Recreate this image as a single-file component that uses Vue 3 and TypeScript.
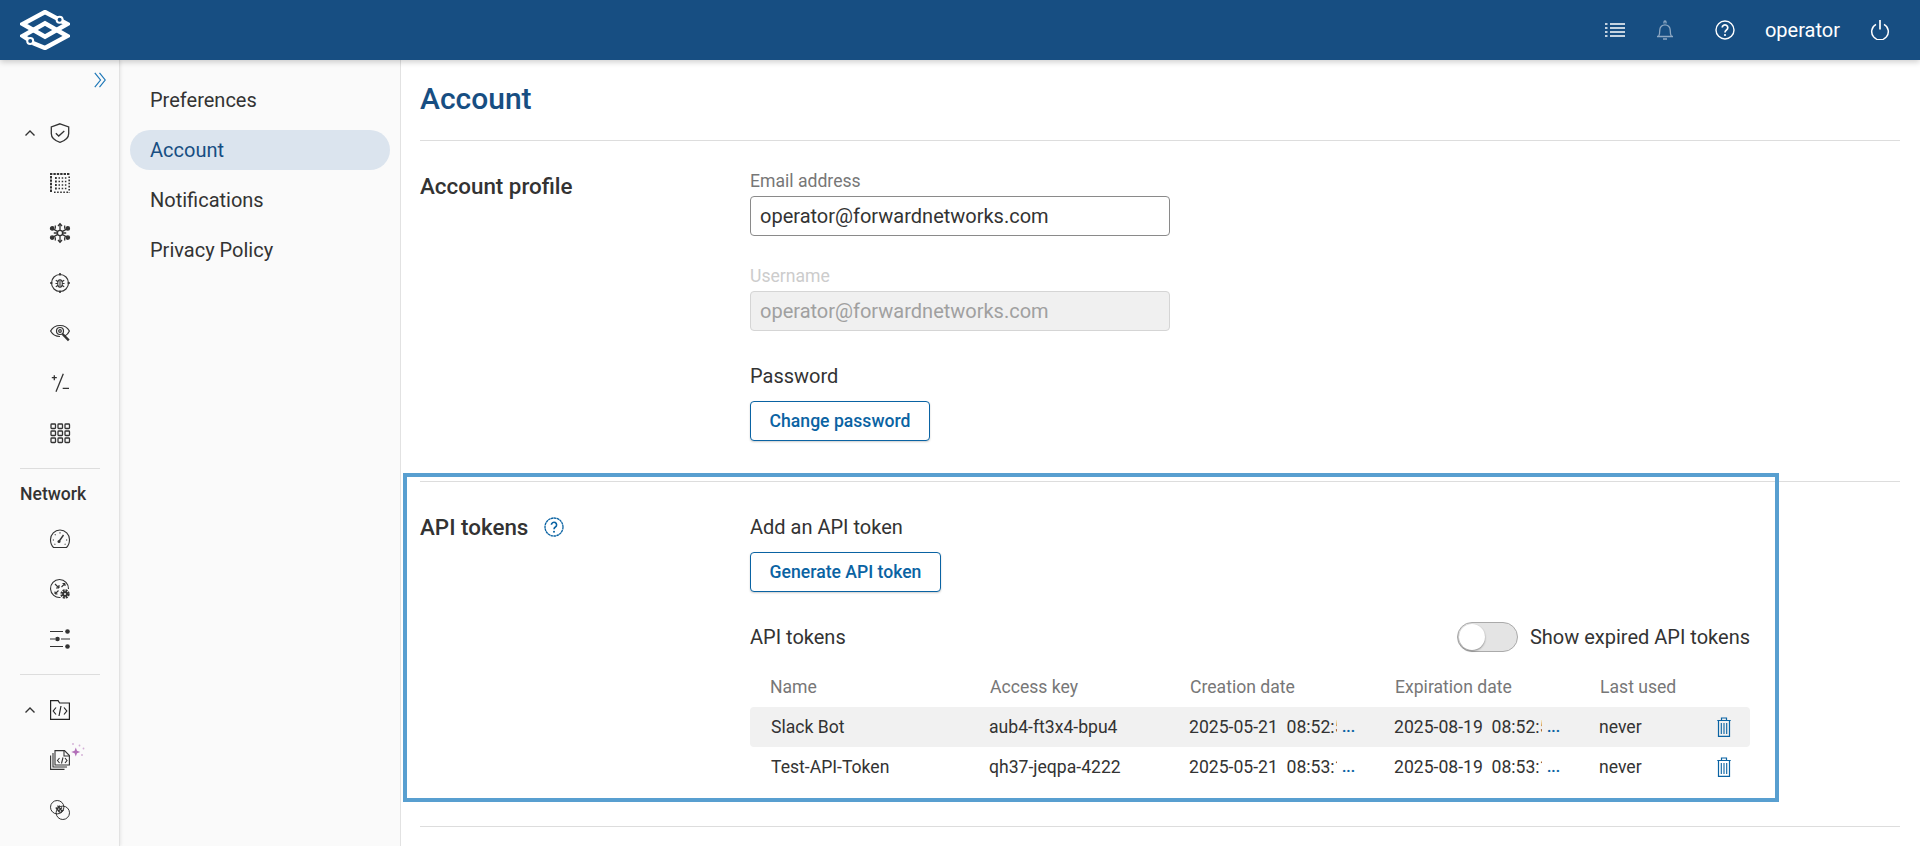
<template>
  <div class="page">
    <header class="topbar">
      <svg class="logo" viewBox="0 0 50 40" fill="none" stroke="#fff" stroke-width="4.400" stroke-linejoin="miter">
        <path d="M37 8.400 25 2 2.800 14 25 26.600 47.200 14 42 11.200" />
        <path d="M12.800 33 25 38 47.200 26 25 13.400 2.800 26 7.800 29.200" />
        <circle cx="39.600" cy="9.800" r="3" fill="#174e82" stroke-width="2" />
        <circle cx="10.200" cy="31" r="3" fill="#174e82" stroke-width="2" />
      </svg>
      <div class="top-actions">
        <svg class="top-icon list" viewBox="0 0 20 16" fill="none" stroke="#fff" stroke-width="1.500">
          <path d="M0 2h2.500M5 2h15M0 6h2.500M5 6h15M0 10h2.500M5 10h15M0 14h2.500M5 14h15" />
        </svg>
        <svg class="top-icon bell" viewBox="0 0 20 20" fill="none" stroke="#8ea8c3" stroke-width="1.300">
          <path d="M2 16.500h16M3.500 16.500c1-1.500 1.300-3 1.300-6.500a5.200 5.200 0 0 1 10.400 0c0 3.500.3 5 1.300 6.500" />
          <path d="M8 19h4M9 3.500V2a1 1 0 0 1 2 0v1.500" />
        </svg>
        <svg class="top-icon help" viewBox="0 0 20 20" fill="none" stroke="#fff" stroke-width="1.400">
          <circle cx="10" cy="10" r="9" />
          <path d="M7.200 7.600a2.800 2.800 0 1 1 4.300 2.400c-1 .7-1.500 1.200-1.500 2.500" stroke-width="1.700" />
          <circle cx="10" cy="15" r="1.100" fill="#fff" stroke="none" />
        </svg>
        <span class="user">operator</span>
        <svg class="top-icon power" viewBox="0 0 20 20" fill="none" stroke="#fff" stroke-width="1.500">
          <path d="M6 4.300a8.300 8.300 0 1 0 8 0" />
          <path d="M10 0v9.500" stroke-width="1.700" />
        </svg>
      </div>
    </header>

    <div class="body">
      <aside class="rail">
        <svg class="collapse" viewBox="0 0 12 16" fill="none" stroke="#1e78b8" stroke-width="1.200">
          <path d="M.8.800 6.500 8 .8 15.200M5.500.800 11.200 8 5.500 15.200" />
        </svg>

        <div class="rail-group first">
          <div class="rail-row">
            <svg class="chev" viewBox="0 0 10 6" fill="none" stroke="#333" stroke-width="1.400"><path d="M.5 5.500 5 1l4.500 4.500" /></svg>
            <svg class="ri" viewBox="0 0 20 20" fill="none" stroke="#333" stroke-width="1.300">
              <path d="M10 .8 18.700 4v6.500c0 4-3.700 7.200-8.700 8.800-5-1.600-8.700-4.800-8.700-8.800V4z" />
              <path d="m5.800 10.300 2.900 2.700 5.600-5" />
            </svg>
          </div>
          <div class="rail-row">
            <svg class="ri" viewBox="0 0 20 20" fill="none" stroke="#333">
              <path d="M0 1h20M1 3v17" stroke-width="2" stroke-dasharray="2.400 1" />
              <path d="M19.200 3.500v16M4 19.200h14" stroke-width="1.600" stroke-dasharray="1.600 1.500" />
              <path d="M5 5h2M5 8.500h2M5 12h2M5 15.500h2" stroke-width="1.800" stroke-dasharray="1.800 1.200" />
              <path d="M8.500 5h9M8.500 8.500h9M8.500 12h9M8.500 15.500h9" stroke-width="1.500" stroke-dasharray="1.500 1.700" />
            </svg>
          </div>
          <div class="rail-row">
            <svg class="ri" viewBox="0 0 20 20" fill="#333" stroke="#333" stroke-width="1.300">
              <circle cx="10" cy="10" r="2.600" fill="none" />
              <path d="M10 7.400V.8M10 12.600v6.600M7.800 8.600l-5.600-3.200M12.200 11.400l5.600 3.200M7.800 11.400l-5.600 3.200M12.200 8.600l5.600-3.200M7.400 10H3.800M12.600 10h3.600" fill="none" />
              <path d="M8 3 10 .8l2 2.200M8 17l2 2.200 2-2.200M5.300 2.500v3.200M14.700 2.500v3.200M5.300 14.300v3.200M14.700 14.300v3.200" fill="none" />
              <circle cx="2.200" cy="5.400" r="1.700" /><circle cx="17.800" cy="5.400" r="1.700" />
              <circle cx="2.200" cy="14.600" r="1.700" /><circle cx="17.800" cy="14.600" r="1.700" />
            </svg>
          </div>
          <div class="rail-row">
            <svg class="ri" viewBox="0 0 20 20" fill="none" stroke="#333" stroke-width="1.100">
              <circle cx="10" cy="10" r="8.500" />
              <path d="M10 0v2.500M10 17.500V20M0 10h2.500M17.500 10H20" stroke-width="1.600" />
              <ellipse cx="10" cy="10.500" rx="2.300" ry="3.700" />
              <path d="M10 6.800v7.400M5.800 7.200l2.400 1.600M14.200 7.200l-2.400 1.600M5.500 10.500h2.200M14.500 10.500h-2.200M5.800 13.800l2.400-1.600M14.200 13.800l-2.400-1.600" />
            </svg>
          </div>
          <div class="rail-row">
            <svg class="ri" viewBox="0 0 20 20" fill="none" stroke="#333" stroke-width="1.200">
              <path d="M14.500 13.300C17 12 19 9 19.400 8 17.500 4.500 14 2.500 10 2.500S2.500 4.500.6 8c1.900 3.500 5.400 5.500 9.400 5.500" />
              <circle cx="10" cy="8" r="3.500" />
              <circle cx="10" cy="8" r="1.300" />
              <path d="m12.500 11 6.300 6.300" stroke-width="2.400" />
            </svg>
          </div>
          <div class="rail-row">
            <svg class="ri" viewBox="0 0 20 20" fill="none" stroke="#333" stroke-width="1.300">
              <path d="M13.300.7 6 18.700M4.300 2.200v5M1.800 4.700h5M12.700 15.300H19" />
            </svg>
          </div>
          <div class="rail-row">
            <svg class="ri" viewBox="0 0 20 20" fill="none" stroke="#333" stroke-width="1.300">
              <g v-for="y in [1, 8, 15]" :key="y">
                <rect v-for="x in [1, 8, 15]" :key="x" :x="x" :y="y" width="4.500" height="4.500" rx=".8" />
              </g>
            </svg>
          </div>
        </div>

        <div class="rail-group network">
          <div class="rail-title">Network</div>
          <div class="rail-row">
            <svg class="ri" viewBox="0 0 20 20" fill="none" stroke="#333" stroke-width="1.100">
              <path d="M3.500 18.500C1.700 16.800.5 14.500.5 10.500a9.500 9.500 0 0 1 19 0c0 4-1.200 6.300-3 8z" />
              <path d="m9.300 12 4.200-6" stroke-width="1.400" />
              <circle cx="9" cy="12.500" r="1.500" fill="#333" stroke="none" />
              <path d="M10 3.300v1.200M4.800 5.300l.8.8M2.800 11H4M16 11h1.200M4.500 15.500l.8-.5M15.500 15.500l-.8-.5" />
            </svg>
          </div>
          <div class="rail-row">
            <svg class="ri" viewBox="0 0 20 20" fill="none" stroke="#333" stroke-width="1.100">
              <path d="M10.500 18.500a9 9 0 1 1 8-8.500" />
              <path d="M5 5l4 4M9 9H6M9 9V6M15 4.500 11.500 8M15 4.500h-2.500M15 4.500V7M8.500 11.500 5 15M5 15h2.500M5 15v-2.500" />
              <circle cx="15" cy="15" r="3.300" stroke-width="2.800" stroke-dasharray="1.800 .8" />
              <circle cx="15" cy="15" r="2.800" fill="#333" stroke="none" />
              <circle cx="15" cy="15" r="1" fill="#fafafa" stroke="none" />
            </svg>
          </div>
          <div class="rail-row">
            <svg class="ri" viewBox="0 0 20 20" fill="none" stroke="#333" stroke-width="1.100">
              <path d="M0 2.500h13M0 10h5M11 10h9M0 17.500h13" />
              <circle cx="17.500" cy="2.500" r="2.300" fill="#333" stroke="none" />
              <circle cx="7.500" cy="10" r="2.300" fill="#333" stroke="none" />
              <circle cx="17.500" cy="17.500" r="2.300" fill="#333" stroke="none" />
            </svg>
          </div>
        </div>

        <div class="rail-group code">
          <div class="rail-row">
            <svg class="chev" viewBox="0 0 10 6" fill="none" stroke="#333" stroke-width="1.400"><path d="M.5 5.500 5 1l4.500 4.500" /></svg>
            <svg class="ri" viewBox="0 0 20 20" fill="none" stroke="#222" stroke-width="1.200">
              <path d="M.6 19.400V.6h7.500l1.500 2.400h9.800v16.400z" />
              <path d="M6 7.500 3.200 11 6 14.500M14 7.500l2.800 3.500-2.800 3.500M11 6 9 16" />
            </svg>
          </div>
          <div class="rail-row">
            <svg class="ri" viewBox="0 0 20 20" fill="none" stroke="#333" stroke-width="1.100">
              <path d="M5 .6h9.500l4.900 4.900V15H5z" fill="#fafafa" />
              <path d="M14 .6V6h5.400" />
              <path d="M3 3v14h14" />
              <path d="M.6 5.400v14h13.900" />
              <path d="m9.500 8-2 2.500 2 2.500M15 8l2 2.500-2 2.500M13 7.500l-1.500 6" />
            </svg>
            <svg class="spark" viewBox="0 0 16 16" fill="#b26fb8">
              <path d="M5.800 4.500 7 7.800l3.300 1.200L7 10.200 5.800 13.500 4.600 10.200 1.300 9l3.300-1.200z" />
              <circle cx="3" cy="1" r=".9" opacity=".55" />
              <circle cx="9.500" cy="2.500" r=".9" opacity=".55" />
              <circle cx="13.500" cy="5.500" r=".9" opacity=".55" />
              <circle cx="12" cy="12" r=".9" opacity=".55" />
            </svg>
          </div>
          <div class="rail-row">
            <svg class="ri" viewBox="0 0 20 20" fill="none" stroke="#333" stroke-width="1">
              <circle cx="7.200" cy="7.200" r="6.700" />
              <circle cx="12.800" cy="12.800" r="6.700" />
              <path d="M6.800 9 10 5.800M8.500 11 12 7.500M10.500 12.800l3-3M5.800 7.500l4 5M7.500 5.700l5 6" stroke-width="1.300" />
            </svg>
          </div>
        </div>
      </aside>

      <nav class="side-nav">
        <a v-for="item in navItems" :key="item" class="nav-item" :class="{ active: item === 'Account' }">{{ item }}</a>
      </nav>

      <main class="main">
        <h1 class="title">Account</h1>

        <section class="section profile">
          <h2>Account profile</h2>
          <div class="col">
            <label class="field">
              <span class="label">Email address</span>
              <input type="text" value="operator@forwardnetworks.com" />
            </label>
            <label class="field disabled">
              <span class="label">Username</span>
              <input type="text" value="operator@forwardnetworks.com" disabled />
            </label>
            <div class="sub">Password</div>
            <button class="btn pw" type="button">Change password</button>
          </div>
        </section>

        <section class="section tokens">
          <div class="highlight"></div>
          <h2>
            API tokens
            <svg class="help-sm" viewBox="0 0 20 20" fill="none" stroke="#0a63a3" stroke-width="1.300">
              <circle cx="10" cy="10" r="9" stroke-dasharray="2.600 .4" />
              <path d="M7.400 7.800a2.600 2.600 0 1 1 4 2.200c-.9.600-1.400 1.100-1.400 2.300" stroke-width="1.600" />
              <circle cx="10" cy="14.800" r="1" fill="#0a63a3" stroke="none" />
            </svg>
          </h2>
          <div class="col wide">
            <div class="sub">Add an API token</div>
            <button class="btn gen" type="button">Generate API token</button>
            <div class="list-head">
              <span class="sub">API tokens</span>
              <span class="toggle-wrap">
                <span class="toggle"><span class="knob"></span></span>
                Show expired API tokens
              </span>
            </div>
            <div class="thead">
              <span v-for="h in headers" :key="h">{{ h }}</span>
            </div>
            <div v-for="(t, i) in tokens" :key="t.key" class="trow" :class="{ hovered: i === 0 }">
              <span class="name">{{ t.name }}</span>
              <span>{{ t.key }}</span>
              <span class="date"><span class="clip">{{ t.created }}</span><b>...</b></span>
              <span class="date"><span class="clip">{{ t.expires }}</span><b>...</b></span>
              <span>{{ t.lastUsed }}</span>
              <svg class="trash" viewBox="0 0 14 20" fill="none" stroke="#0a63a3" stroke-width="1.200">
                <path d="M.3 3.500h13.400M4.500 3.500V1h5v2.500" />
                <path d="M1.500 3.500v15.900h11V3.500z" />
                <path d="M4.300 6v11M7 6v11M9.700 6v11" stroke-width="1.100" />
              </svg>
            </div>
          </div>
        </section>
      </main>
    </div>
  </div>
</template>

<script setup lang="ts">
interface Token {
  name: string
  key: string
  created: string
  expires: string
  lastUsed: string
}

const navItems = ['Preferences', 'Account', 'Notifications', 'Privacy Policy']
const headers = ['Name', 'Access key', 'Creation date', 'Expiration date', 'Last used']

const tokens: Token[] = [
  {
    name: 'Slack Bot',
    key: 'aub4-ft3x4-bpu4',
    created: '2025-05-21  08:52:58',
    expires: '2025-08-19  08:52:58',
    lastUsed: 'never',
  },
  {
    name: 'Test-API-Token',
    key: 'qh37-jeqpa-4222',
    created: '2025-05-21  08:53:17',
    expires: '2025-08-19  08:53:17',
    lastUsed: 'never',
  },
]
</script>

<style>
html,
body {
  margin: 0;
  overflow: hidden;
}
</style>

<style scoped>
.page {
  height: 100vh;
  display: flex;
  flex-direction: column;
  overflow: hidden;
  font-family: Roboto, "Liberation Sans", sans-serif;
  font-size: 20px;
  color: #333;
  background: #fff;
}

.topbar {
  position: relative;
  z-index: 2;
  flex: 0 0 60px;
  display: flex;
  align-items: center;
  justify-content: space-between;
  padding: 0 30px 0 20px;
  background: #174e82;
  box-shadow: 0 2px 6px rgba(0, 0, 0, 0.2);
}

.logo {
  width: 50px;
  height: 40px;
}

.top-actions {
  display: flex;
  align-items: center;
  color: #fff;
}

.top-icon {
  width: 20px;
  height: 20px;
  flex: none;
}

.top-icon.list {
  height: 16px;
}

.top-icon.bell {
  margin-left: 30px;
}

.top-icon.help {
  margin-left: 40px;
}

.user {
  margin-left: 30px;
}

.top-icon.power {
  margin-left: 30px;
}

.body {
  flex: 1;
  display: flex;
  min-height: 0;
}

.rail {
  flex: 0 0 120px;
  box-sizing: border-box;
  display: flex;
  flex-direction: column;
  padding-top: 12px;
  background: #fafafa;
  border-right: 1px solid #e2e2e2;
  box-shadow: 1px 0 3px rgba(0, 0, 0, 0.08);
  position: relative;
  z-index: 1;
}

.collapse {
  align-self: flex-end;
  width: 12px;
  height: 16px;
  margin-right: 13px;
}

.rail-group {
  margin: 0 19px 0 20px;
}

.rail-group.first {
  margin-top: 20px;
  padding-bottom: 10px;
  border-bottom: 1px solid #ddd;
}

.rail-row {
  position: relative;
  height: 50px;
  display: flex;
  align-items: center;
  justify-content: center;
  padding-right: 1px;
}

.rail-title {
  margin-top: 15px;
  font-size: 17.6px;
  font-weight: 500;
  line-height: 20px;
}

.network {
  padding-bottom: 10px;
  border-bottom: 1px solid #ddd;
}

.network .rail-title + .rail-row {
  margin-top: 10px;
}

.code {
  margin-top: 10px;
}

.ri {
  width: 20px;
  height: 20px;
  overflow: visible;
}

.chev {
  position: absolute;
  left: 5px;
  top: 22px;
  width: 10px;
  height: 6px;
}

.spark {
  position: absolute;
  left: 50px;
  top: 8px;
  width: 16px;
  height: 16px;
}

.side-nav {
  flex: 0 0 281px;
  box-sizing: border-box;
  padding: 20px 10px 0;
  background: #fafafa;
  border-right: 1px solid #e2e2e2;
  display: flex;
  flex-direction: column;
  gap: 10px;
}

.nav-item {
  height: 40px;
  line-height: 40px;
  padding-left: 20px;
  border-radius: 20px;
  color: #333;
}

.nav-item.active {
  background: #dbe4ee;
  color: #174e82;
}

.main {
  flex: 1;
  min-width: 0;
  padding: 0 20px 0 19px;
}

.title {
  margin: 0;
  height: 81px;
  line-height: 78px;
  box-sizing: border-box;
  font-size: 30px;
  font-weight: 500;
  color: #174e82;
  border-bottom: 1px solid #ddd;
}

.section {
  position: relative;
  display: flex;
  box-sizing: border-box;
  border-bottom: 1px solid #ddd;
}

.section h2 {
  flex: 0 0 330px;
  margin: 0;
  font-size: 22.4px;
  font-weight: 500;
  line-height: 30px;
  display: flex;
  align-items: center;
  align-self: flex-start;
}

.profile {
  height: 341px;
  padding-top: 30px;
}

.col {
  width: 420px;
}

.col.wide {
  width: 1000px;
}

.field {
  display: block;
  margin-bottom: 30px;
}

.label {
  display: block;
  font-size: 17.6px;
  line-height: 20px;
  margin-bottom: 5px;
  color: #777;
}

.field input {
  display: block;
  box-sizing: border-box;
  width: 100%;
  height: 40px;
  padding: 0 9px;
  border: 1px solid #8a8a8a;
  border-radius: 4px;
  outline: none;
  font: inherit;
  color: #333;
  background: #fff;
}

.field.disabled .label {
  color: #ccc;
}

.field.disabled input {
  border-color: #d5d5d5;
  background: #f0f0f0;
  color: #a0a0a0;
}

.sub {
  line-height: 30px;
}

.btn {
  display: block;
  box-sizing: border-box;
  height: 40px;
  margin-top: 10px;
  border: 1px solid #0a63a3;
  border-radius: 4px;
  background: #fff;
  color: #0a63a3;
  font-family: inherit;
  font-size: 17.6px;
  font-weight: 500;
  box-shadow: 0 1px 2px rgba(0, 0, 0, 0.2);
}

.btn.pw {
  width: 180px;
}

.btn.gen {
  width: 191px;
}

.tokens {
  height: 345px;
  padding-top: 30px;
}

.help-sm {
  width: 20px;
  height: 20px;
  margin-left: 16px;
}

.highlight {
  position: absolute;
  left: -17px;
  top: -9px;
  width: 1376px;
  height: 329px;
  box-sizing: border-box;
  border: 4px solid #589fd0;
  pointer-events: none;
}

.list-head {
  display: flex;
  align-items: center;
  justify-content: space-between;
  height: 30px;
  margin-top: 30px;
}

.toggle-wrap {
  display: flex;
  align-items: center;
  gap: 12px;
}

.toggle {
  position: relative;
  display: block;
  width: 61px;
  height: 30px;
  box-sizing: border-box;
  border: 1px solid #aaa;
  border-radius: 15px;
  background: #e4e4e4;
}

.knob {
  position: absolute;
  left: 1px;
  top: 1px;
  width: 26px;
  height: 26px;
  border-radius: 50%;
  background: #fff;
  box-shadow: 0 1px 2px rgba(0, 0, 0, 0.4);
}

.thead {
  display: grid;
  grid-template-columns: 220px 200px 205px 205px 150px;
  box-sizing: border-box;
  height: 55px;
  padding: 15px 0 0 20px;
  align-items: center;
  font-size: 17.6px;
  color: #777;
}

.trow {
  position: relative;
  display: grid;
  grid-template-columns: 239px 200px 205px 205px 150px;
  height: 40px;
  align-items: center;
  font-size: 17.6px;
  border-radius: 4px;
}

.trow.hovered {
  background: #f1f1f1;
}

.name {
  padding-left: 21px;
}

.date {
  display: flex;
  align-items: center;
}

.clip {
  width: 148px;
  overflow: hidden;
  white-space: pre;
}

.date b {
  margin-left: 5px;
  font-size: 15px;
  color: #0a63a3;
  font-weight: 700;
}

.trash {
  position: absolute;
  left: 967px;
  top: 10px;
  width: 14px;
  height: 20px;
}
</style>
